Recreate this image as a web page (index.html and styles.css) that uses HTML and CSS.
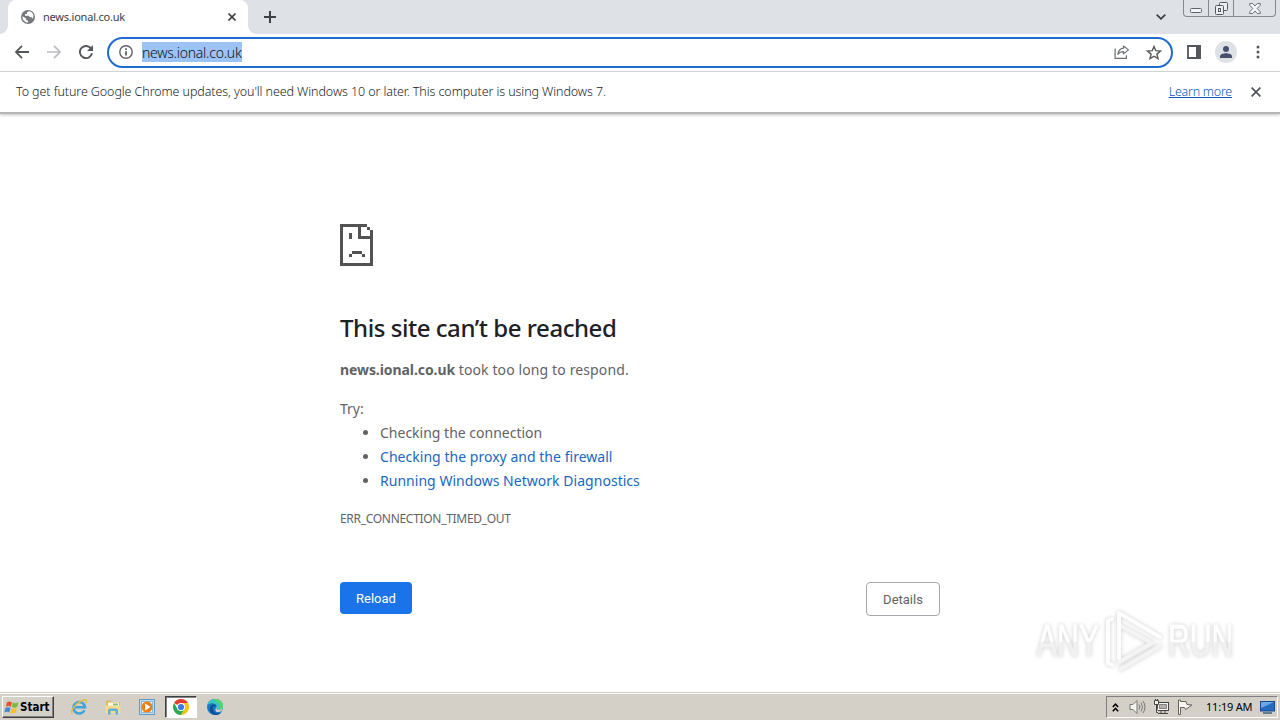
FILE: index.html
```html
<!DOCTYPE html>
<html lang="en">
<head>
  <meta charset="utf-8">
  <title>news.ional.co.uk</title>
  <link rel="stylesheet" href="styles.css">
</head>
<body>
  <div class="tabstrip">
    <div class="tab">
      <svg class="favicon" width="14" height="14" viewBox="0 0 14 14">
        <circle cx="7" cy="7" r="7" fill="#75787c"/>
        <path d="M1.500 6.200 5 8.500v1.200l2 1v1.800C4 12.500 1.200 10 1.500 6.200zM8 1.300C6.500 2 5.500 2.500 6 4h-2v1.700h3.500l1.500 1.500h1.800l.8 1.500c1-1.500 1.200-3.200.4-4.800C11.200 2.500 9.800 1.500 8 1.300z" fill="#fff"/>
      </svg>
      <span class="tab-title">news.ional.co.uk</span>
      <svg class="tab-close" width="8" height="8" viewBox="0 0 8 8"><path d="M.5.5l7 7M7.500.5l-7 7" stroke="#3c4043" stroke-width="1.600"/></svg>
    </div>
    <svg class="new-tab" width="12" height="12" viewBox="0 0 12 12"><path d="M6 0v12M0 6h12" stroke="#3c4043" stroke-width="2"/></svg>
    <svg class="tab-search" width="10" height="6" viewBox="0 0 10 6"><path d="M.7.7 5 4.900 9.300.7" fill="none" stroke="#3c4043" stroke-width="1.700"/></svg>
    <div class="window-controls">
      <span class="control"><svg width="12" height="5" viewBox="0 0 12 5"><rect x=".5" y=".5" width="11" height="4" rx="1" fill="#f4f5f7" stroke="#5f6368"/></svg></span>
      <span class="control"><svg width="13" height="13" viewBox="0 0 13 13" fill="#eceef1" stroke="#55595f"><rect x="4.500" y=".5" width="8" height="8" rx="1"/><rect x=".5" y="3.500" width="8" height="9" rx="1"/><rect x="3.500" y="6.500" width="2" height="3"/></svg></span>
      <span class="control control-close"><svg width="12" height="11" viewBox="0 0 12 11"><path d="M.7.5h3L6 3 8.300.5h3v1.700L8.200 5.500l3.100 3.300v1.700h-3L6 8l-2.300 2.500h-3V8.800l3.100-3.300L.7 2.200z" fill="#f4f5f7" stroke="#5f6368" stroke-width=".9"/></svg></span>
    </div>
  </div>

  <div class="toolbar">
    <svg class="back" width="14" height="14" viewBox="0 0 14 14"><path d="M14 7H1.500M7 .8.900 7 7 13.200" fill="none" stroke="#54575b" stroke-width="1.800"/></svg>
    <svg class="forward" width="14" height="14" viewBox="0 0 14 14"><path d="M0 7h12.500M7 .8 13.100 7 7 13.200" fill="none" stroke="#b8babd" stroke-width="1.700"/></svg>
    <svg class="reload" width="14" height="14" viewBox="0 0 14 14"><path d="M12.200 3.800A6.100 6.100 0 1 0 13 8.300" fill="none" stroke="#54575b" stroke-width="1.900"/><path d="M14 0v6H8z" fill="#54575b"/></svg>
    <div class="omnibox">
      <svg class="info" width="14" height="14" viewBox="0 0 14 14"><circle cx="7" cy="7" r="6.200" fill="none" stroke="#5f6368" stroke-width="1.400"/><path d="M7 6.200v4.300M7 3.300v1.600" stroke="#5f6368" stroke-width="1.800"/></svg>
      <span class="url">news.ional.co.uk</span>
      <svg class="share" width="16" height="14" viewBox="0 0 16 14" fill="none" stroke="#6b6f74" stroke-width="1.200"><path d="M1.100 3.500v9.800h11.300v-3"/><path d="M9.500 1 14.500 4.900l-5 4V6.700C7 6.600 5.300 7.500 3.900 9.300 4.300 6 6 3.700 9.500 3.200z" stroke-linejoin="round"/></svg>
      <svg class="star" width="16" height="15" viewBox="0 0 16 15"><path d="M8 1.500 9.800 5.700l4.600.4-3.500 3 1.100 4.500L8 11.200l-4 2.400 1.100-4.500-3.500-3 4.600-.4z" fill="none" stroke="#54575b" stroke-width="1.400"/></svg>
    </div>
    <svg class="side-panel" width="14" height="14" viewBox="0 0 14 14"><path d="M1 1h12v12H1z" fill="none" stroke="#54575b" stroke-width="1.800"/><path d="M9 0h5v14H9z" fill="#54575b"/></svg>
    <svg class="avatar" width="22" height="22" viewBox="0 0 22 22"><circle cx="11" cy="11" r="11" fill="#dee1e6"/><circle cx="11" cy="8" r="3" fill="#46526b"/><path d="M5 17v-1.500C5 13.500 8 12.300 11 12.300s6 1.200 6 3.200V17z" fill="#46526b"/></svg>
    <svg class="menu" width="4" height="14" viewBox="0 0 4 14" fill="#54575b"><circle cx="2" cy="2" r="1.500"/><circle cx="2" cy="7" r="1.500"/><circle cx="2" cy="12" r="1.500"/></svg>
  </div>

  <div class="infobar">
    <span class="infobar-text">To get future Google Chrome updates, you'll need Windows 10 or later. This computer is using Windows 7.</span>
    <a class="learn-more">Learn more</a>
    <svg class="infobar-close" width="10" height="10" viewBox="0 0 10 10"><path d="M.6.6l8.800 8.800M9.400.6.6 9.400" stroke="#54575b" stroke-width="1.800"/></svg>
  </div>

  <main class="page">
    <div class="error">
      <svg class="sad-page" width="33" height="42" viewBox="0 0 33 42" fill="#535353" shape-rendering="crispEdges">
        <path d="M0 0h27v3H3v36h27V15H18V3h3v9h9V6h3v36H0z"/>
        <path d="M27 3h3v3h-3zM9 9h3v6H9zM12 27h10v3H12zM9 30h3v3H9zM22 30h3v3h-3z"/>
      </svg>
      <h1>This site can’t be reached</h1>
      <p class="summary"><strong>news.ional.co.uk</strong> <span>took too long to respond.</span></p>
      <p class="try">Try:</p>
      <ul>
        <li>Checking the connection</li>
        <li><a>Checking the proxy and the firewall</a></li>
        <li><a>Running Windows Network Diagnostics</a></li>
      </ul>
      <div class="error-code">ERR_CONNECTION_TIMED_OUT</div>
      <div class="buttons">
        <button class="btn-reload">Reload</button>
        <button class="btn-details">Details</button>
      </div>
    </div>
    <div class="watermark">
      <span>ANY</span>
      <svg width="60" height="66" viewBox="0 0 60 66" fill="none" stroke="#fdfdfd" stroke-width="4" stroke-linejoin="round" stroke-linecap="round">
        <path d="M15 50V17l33 18L15 54M56 38 17 61" stroke="#f4f4f4"/>
        <path d="M8 11 4 13v42l4 2"/>
        <path d="M15 50V5l41 24"/>
      </svg>
      <span>RUN</span>
    </div>
  </main>

  <div class="taskbar">
    <div class="start">
      <svg width="16" height="15" viewBox="0 0 16 15">
        <path d="M3 2.300C5 1 6.500 1.300 8 2.200L6.800 6.700C5.200 5.800 3.700 5.900 1.800 6.800z" fill="#e8542a"/>
        <path d="M8.900 2.600c1.700.9 3.200.8 5.600-.3l-1.300 4.600c-2 1-3.700 1-5.500.1z" fill="#7dba3c"/>
        <path d="M1.500 7.800c2-.9 3.400-.9 5 0l-1.200 4.600c-1.600-.9-3-.9-5 0z" fill="#3d8ad8"/>
        <path d="M7.400 8.200c1.800.9 3.400.8 5.500-.1l-1.300 4.500c-2 1-3.700 1-5.400.2z" fill="#fbc02d"/>
      </svg>
      <span>Start</span>
    </div>
    <div class="task">
      <svg width="18" height="18" viewBox="0 0 18 18" fill="none">
        <path d="M14.500 12.200A5.800 5.800 0 1 1 15 9.300H5" stroke="#3fa2da" stroke-width="2.500"/>
        <path d="M2.500 16C-1 14 6 4 14 2c3-.8 3 1.500 2 3" stroke="#e2b94a" stroke-width="1.400"/>
      </svg>
    </div>
    <div class="task">
      <svg width="16" height="16" viewBox="0 0 16 16">
        <path d="M1 1.500h5l1 1.500h8V14H1z" fill="#d9b95c"/>
        <path d="M3 3.500h11v4H3z" fill="#fffbe6"/>
        <path d="M8 4.500h5v2H8z" fill="#7fb98c"/>
        <path d="M.5 6.500h15V14H.5z" fill="#f3dc8c"/>
        <path d="M3 15.500v-4q0-2 2-2h6q2 0 2 2v4h-2.500V12h-5v3.500z" fill="#62aeda"/>
      </svg>
    </div>
    <div class="task">
      <svg width="16" height="16" viewBox="0 0 16 16">
        <rect x=".5" y=".5" width="15" height="15" fill="#b9dcf2" stroke="#5c9cc7"/>
        <rect x="2.500" y="2.500" width="11" height="11" fill="#e6f4fc" stroke="#8cbcdc"/>
        <circle cx="8" cy="8" r="5.500" fill="#f07f13"/>
        <path d="M6 4.500 11.500 8 6 11.500z" fill="#fff"/>
      </svg>
    </div>
    <div class="task active">
      <svg width="16" height="16" viewBox="0 0 16 16">
        <path d="M8 8 1.070 4A8 8 0 0 1 14.930 4z" fill="#e33b2e"/>
        <path d="M8 8V4h6.930A8 8 0 0 1 8 16l3.460-6z" fill="#fbc116"/>
        <path d="M8 8l3.460 2L8 16A8 8 0 0 1 1.070 4l3.470 6z" fill="#2da94f"/>
        <circle cx="8" cy="8" r="4" fill="#fff"/>
        <circle cx="8" cy="8" r="3.100" fill="#3b78e7"/>
      </svg>
    </div>
    <div class="task">
      <svg width="16" height="16" viewBox="0 0 16 16">
        <circle cx="8" cy="8" r="8" fill="#1679c9"/>
        <path d="M.2 6.500C1 2.800 4 0 8 0c4.800 0 8 3.300 8 7 0 2.700-2 4-4.200 4-1.700 0-2.500-.7-2.200-1.300C10.800 6 7 3.500 3.500 4.500 2 5 .8 5.500.2 6.500z" fill="#39c6bd"/>
        <path d="M8.500 0C13 .2 16 3.300 16 7c0 2.700-2 4-4.200 4 3-3.500 1.200-8-5.300-10.800z" fill="#5ad463"/>
        <path d="M6 8c-1 3.500 1.500 6.800 6 6.300 1-.2 2-.8 2.700-1.500C12 17 6 17 3.500 13 2 10 3 7 5.500 5.500 7.500 5 9 6 9.500 7.500 8.500 6.700 6.500 6.700 6 8z" fill="#104f93"/>
        <path d="M9.800 7.500c.3 1-.6 2-.2 2.500.8 1.400 4.700 1.200 6-1.300-.2 2.500-1.500 4-3.500 4.300-3.500.5-5-2-2.300-5.500z" fill="#d4d0c8"/>
      </svg>
    </div>
    <div class="tray">
      <svg class="tray-more" width="7" height="9" viewBox="0 0 7 9" fill="none" stroke="#000" stroke-width="1.500"><path d="M.8 4 3.500 1.200 6.200 4M.8 8.200l2.700-2.800 2.700 2.800"/></svg>
      <svg class="tray-sound" width="17" height="16" viewBox="0 0 17 16" fill="none" stroke="#787878"><path d="M1 5.500h3l4-4v13l-4-4H1z" fill="#f4f3f0"/><path d="M10 5.500q1.500 2.500 0 5M12 3.500q3 4.500 0 9M14 2q4 6 0 12"/></svg>
      <svg class="tray-network" width="17" height="16" viewBox="0 0 17 16" fill="none" stroke="#454545"><rect x="4.500" y="3.500" width="11" height="8" fill="#f4f3f0"/><path d="M6.500 5.500h7v4h-7z" fill="#b5b2ad" stroke="#85827d"/><path d="M5 14.500h10M8 12v2M12 12v2"/><path d="M1.500 1.500h4v4h-4zM2.500 0v2M4.500 0v2M3.500 5.500v8H5" fill="#f4f3f0"/></svg>
      <svg class="tray-flag" width="16" height="16" viewBox="0 0 16 16"><path d="M1.500 1v14.500h2V8.500h4l1 2 6.500-4.500-5-.5-1-3H3.500V1z" fill="#f7f6f3" stroke="#65625d"/></svg>
      <span class="clock">11:19 AM</span>
      <svg class="tray-desktop" width="15" height="13" viewBox="0 0 15 13"><rect x=".5" y=".5" width="14" height="9.500" fill="#246bc1" stroke="#174987"/><path d="M1 1h13L1 7z" fill="#6baae7"/><path d="M3 12h9" stroke="#416184" stroke-width="1.500"/></svg>
    </div>
  </div>
</body>
</html>
```
FILE: styles.css
```css
:root {
  --frame: #dee1e6;
  --text: #202326;
  --muted: #5f6368;
  --link: #1967c0;
  --taskbar: #d4d0c8;
}

* {
  box-sizing: border-box;
}

body {
  margin: 0;
  width: 1280px;
  height: 720px;
  overflow: hidden;
  display: flex;
  flex-direction: column;
  background: #fff;
  font-family: "Noto Sans", sans-serif;
  color: var(--text);
}

svg {
  display: block;
  flex: none;
}

span, a, strong {
  white-space: nowrap;
}

/* tab strip */

.tabstrip {
  height: 34px;
  flex: none;
  display: flex;
  align-items: center;
  background: var(--frame);
}

.tab {
  position: relative;
  width: 240px;
  height: 34px;
  margin-left: 8px;
  padding: 0 12px 0 13px;
  display: flex;
  align-items: center;
  background: #fff;
  border-radius: 8px 8px 0 0;
}

.tab::before,
.tab::after {
  content: "";
  position: absolute;
  bottom: 0;
  width: 8px;
  height: 8px;
}

.tab::before {
  left: -8px;
  background: radial-gradient(circle at 0 0, transparent 7.5px, #fff 8px);
}

.tab::after {
  right: -8px;
  background: radial-gradient(circle at 100% 0, transparent 7.5px, #fff 8px);
}

.tab-title {
  margin-left: 8px;
  font-size: 11px;
  line-height: 14px;
  letter-spacing: -0.22px;
  color: #3c4043;
}

.tab-close {
  margin-left: auto;
}

.new-tab {
  margin-left: 16px;
}

.tab-search {
  margin-left: auto;
}

.window-controls {
  display: flex;
  align-self: flex-start;
  height: 17px;
  margin: 0 4px 0 17px;
  border: 1px solid #85898f;
  border-top: none;
  border-radius: 0 0 4px 4px;
}

.control {
  width: 25px;
  display: flex;
  align-items: center;
  justify-content: center;
  border-right: 1px solid #85898f;
}

.control:first-child {
  padding-top: 4px;
}

.control-close {
  width: 41px;
  border-right: none;
}

/* toolbar */

.toolbar {
  height: 38px;
  flex: none;
  display: flex;
  align-items: center;
  padding: 0 20px 1px 15px;
  border-bottom: 1px solid #dadce0;
}

.forward {
  margin-left: 18px;
}

.reload {
  margin-left: 18px;
}

.omnibox {
  width: 1066px;
  height: 31px;
  margin-left: 14px;
  padding: 0 9px 0 10px;
  display: flex;
  align-items: center;
  border: 2px solid #1f6bd0;
  border-radius: 16px;
}

.url {
  margin-left: 9px;
  height: 20px;
  line-height: 21px;
  font-size: 14px;
  font-weight: 300;
  letter-spacing: -0.26px;
  color: #101214;
  background: #9cc3f5;
}

.share {
  margin-left: auto;
}

.star {
  margin-left: 16px;
}

.side-panel {
  margin-left: 14px;
}

.avatar {
  margin-left: 14px;
}

.menu {
  margin-left: auto;
}

/* infobar */

.infobar {
  height: 42px;
  flex: none;
  display: flex;
  align-items: center;
  padding: 0 19px 2px 16px;
  border-bottom: 2px solid #b5b5b5;
  box-shadow: 0 1px 3px rgba(0, 0, 0, 0.25);
  font-size: 12.5px;
  font-weight: 300;
  letter-spacing: -0.09px;
}

.learn-more {
  margin: 0 19px 0 auto;
  letter-spacing: -0.25px;
  color: #0b57c0;
  text-decoration: underline;
}

.infobar-close {
  margin-top: 1px;
}

/* error page */

.page {
  position: relative;
  flex: 1;
}

.error {
  width: 600px;
  margin: 0 auto;
  padding-top: 110px;
  font-size: 14px;
  line-height: 24px;
  color: var(--muted);
}

h1 {
  margin: 47px 0 0;
  font-size: 24px;
  font-weight: 500;
  line-height: 30px;
  letter-spacing: -0.45px;
  color: #202124;
  white-space: nowrap;
}

.error p {
  margin: 0;
}

.error .summary {
  margin-top: 15px;
}

.summary strong {
  letter-spacing: -0.08px;
}

.summary span {
  letter-spacing: 0.12px;
}

.error .try {
  margin-top: 15px;
}

ul {
  margin: 0;
  padding-left: 40px;
}

li a {
  color: var(--link);
  letter-spacing: 0.03px;
}

.error-code {
  margin-top: 14px;
  font-size: 12px;
  letter-spacing: -0.3px;
}

.buttons {
  display: flex;
  align-items: flex-start;
  justify-content: space-between;
  margin-top: 51px;
}

button {
  height: 32px;
  padding: 0;
  border: none;
  border-radius: 4px;
  font: 13px Roboto, sans-serif;
}

.btn-reload {
  width: 72px;
  color: #fff;
  background: #1a73e8;
}

.btn-details {
  width: 74px;
  height: 34px;
  color: var(--muted);
  background: #fff;
  border: 1px solid #a4a7ab;
}

/* the logo floats over the page */

.watermark {
  position: absolute;
  right: 45px;
  bottom: 18px;
  display: flex;
  align-items: center;
  gap: 4px;
  font: 45px/66px "Liberation Sans", sans-serif;
  filter: drop-shadow(0 0 2px rgba(0, 0, 0, 0.2));
}

.watermark span {
  margin-right: -30px;
  color: transparent;
  background: linear-gradient(#fff 52%, #f1f1f1 52%);
  background-clip: text;
  -webkit-background-clip: text;
  -webkit-text-stroke: 1px transparent;
  transform: scaleX(0.67);
  transform-origin: left;
}

/* taskbar */

.taskbar {
  height: 28px;
  flex: none;
  display: flex;
  align-items: center;
  padding: 1px 2px 0;
  background: var(--taskbar);
  border-top: 1px solid #d4d0c8;
  box-shadow: inset 0 1px #fff;
}

.start {
  width: 52px;
  height: 22px;
  padding-left: 1px;
  display: flex;
  align-items: center;
  border: 1px solid;
  border-color: #fff #404040 #404040 #fff;
  box-shadow: inset -1px -1px #808080;
  font: bold 11.5px "DejaVu Sans Condensed", sans-serif;
  color: #000;
  margin-right: 9px;
}

.task {
  width: 32px;
  height: 22px;
  margin-right: 2px;
  display: flex;
  align-items: center;
  justify-content: center;
}

.task.active {
  background: #fff;
  border: 1px solid;
  border-color: #404040 #fff #fff #404040;
  box-shadow: inset 1px 1px #808080;
}

.tray {
  width: 172px;
  height: 22px;
  margin-left: auto;
  padding-left: 5px;
  display: flex;
  align-items: center;
  border: 1px solid;
  border-color: #808080 #fff #fff #808080;
}

.tray-sound {
  margin-left: 10px;
}

.tray-network {
  margin-left: 7px;
}

.tray-flag {
  margin-left: 7px;
}

.clock {
  width: 46px;
  margin: -1px 8px 0 13px;
  font-size: 11px;
  letter-spacing: -0.2px;
  color: #000;
}
```
